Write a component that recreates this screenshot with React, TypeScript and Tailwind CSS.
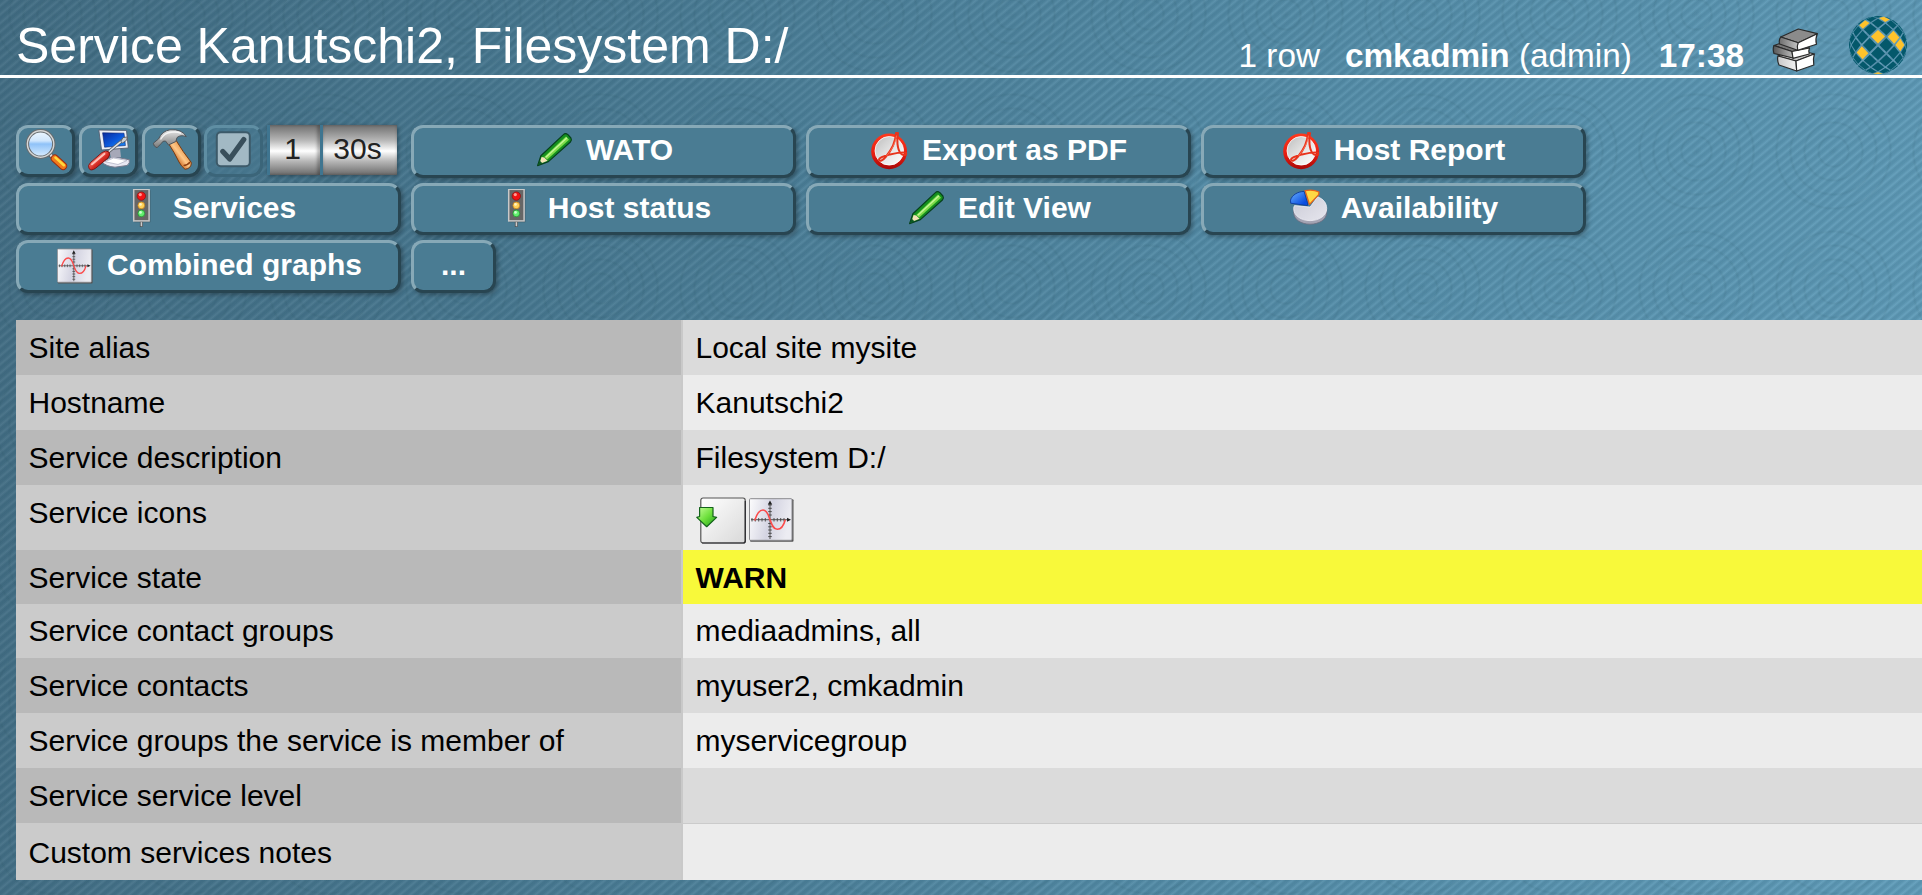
import type { ReactNode } from "react";

const GLOBE_R = 29;
const GLOBE_STEP = (17 * Math.PI) / 180;
const GOLD = ["0,-1", "2,-1", "3,0", "-2,1", "-2,-3", "1,-4", "0,5"];

function project(i: number, j: number) {
  const r = Math.hypot(i, j) * GLOBE_STEP;
  if (r === 0) return "30,30";
  const k = (GLOBE_R * Math.sin(Math.min(r, Math.PI / 2))) / (r / GLOBE_STEP);
  return `${(30 + i * k).toFixed(2)},${(30 + j * k).toFixed(2)}`;
}

function Globe() {
  const cells: ReactNode[] = [];
  const s = 0.84;
  for (let i = -6; i <= 6; i++) {
    for (let j = -6; j <= 6; j++) {
      if ((i + j) % 2 === 0 || Math.hypot(i, j) > 5.7) continue;
      const points = [project(i - s, j), project(i, j - s), project(i + s, j), project(i, j + s)].join(" ");
      cells.push(<polygon key={`${i},${j}`} points={points} fill={GOLD.includes(`${i},${j}`) ? "#ffc32b" : "#04586b"} />);
    }
  }
  return (
    <svg viewBox="0 0 60 60" className="ml-7 h-[60px] w-[60px] shrink-0">
      {cells}
    </svg>
  );
}

function Books() {
  return (
    <svg viewBox="0 0 50 48" className="ml-[26px] h-12 w-[50px] shrink-0" stroke="#2a2a2a" strokeWidth="1.2" strokeLinejoin="round">
      <defs>
        <linearGradient id="bk1" x1="0" x2="1"><stop offset="0" stopColor="#6e6e6e" /><stop offset="1" stopColor="#c4c4c4" /></linearGradient>
        <linearGradient id="bk2" x1="0" x2="1"><stop offset="0" stopColor="#555" /><stop offset="1" stopColor="#bbb" /></linearGradient>
        <linearGradient id="bk3" x1="0" x2="1"><stop offset="0" stopColor="#c9c9c9" /><stop offset="1" stopColor="#f2f2f2" /></linearGradient>
      </defs>
      <path d="M8 29 L26 22 L44.3 27 L26 34Z" fill="#c4c4c4" />
      <path d="M8 29 L26 34 L26.7 44 L9 38 Q6.8 33 8 29Z" fill="url(#bk3)" />
      <path d="M26 34 L44.3 27 Q42.8 32 43.8 38 L26.7 44Z" fill="#fff" />
      <path d="M4 18.5 L14 15 L39.5 21 L22 24.5Z" fill="#777" />
      <path d="M4 18.5 L22 24.5 L23 31 L4 26.5 Q2.4 22 4 18.5Z" fill="url(#bk2)" />
      <path d="M22 24.5 L39.5 21 Q38.2 24 39.3 27 L23 31.3Z" fill="#fff" />
      <path d="M10.7 10 L28.3 2 L47.3 6.7 L28.3 15.7Z" fill="#8b8b8b" />
      <path d="M10.7 10 L28.3 15.7 L27.7 23.3 L9.6 17 Q8.5 13 10.7 10Z" fill="url(#bk1)" />
      <path d="M28.3 15.7 L47.3 6.7 Q45 12 46.5 17.3 L27.7 23.3 Q26.5 19 28.3 15.7Z" fill="#fff" />
    </svg>
  );
}

function SearchIcon() {
  return (
    <svg viewBox="0.7 0 52 46" className="h-[46px] w-[52px]">
      <defs>
        <linearGradient id="lens" x1="0" y1="0" x2="0" y2="1">
          <stop offset="0" stopColor="#eef8ff" /><stop offset=".38" stopColor="#cfe6fd" /><stop offset=".5" stopColor="#8fc2f8" /><stop offset="1" stopColor="#dcefff" />
        </linearGradient>
      </defs>
      <path d="M31.5 26.5 L37 31.5" stroke="#5c5f62" strokeWidth="5" />
      <path d="M32 26.8 L37 31.5" stroke="#e4e4e4" strokeWidth="2.6" />
      <path d="M36.5 30.5 L44.8 38" stroke="#9b2a0c" strokeWidth="8" strokeLinecap="round" />
      <path d="M36.5 30.5 L44.8 38" stroke="#f0791b" strokeWidth="6.2" strokeLinecap="round" />
      <path d="M37.2 29.6 L45.6 37.2" stroke="#ffd93b" strokeWidth="2.6" strokeLinecap="round" />
      <circle cx="22.3" cy="16" r="13.2" fill="url(#lens)" stroke="#686d70" strokeWidth="3.4" />
      <circle cx="22.3" cy="16" r="13.2" fill="none" stroke="#d6d8d8" strokeWidth="1.4" />
    </svg>
  );
}

function MonitorIcon() {
  return (
    <svg viewBox="0 0 52 46" className="h-[46px] w-[52px]">
      <defs>
        <linearGradient id="scr" x1="0" y1="0" x2="1" y2="1"><stop offset="0" stopColor="#0a2a9c" /><stop offset=".5" stopColor="#0b55d8" /><stop offset="1" stopColor="#1c8cf8" /></linearGradient>
        <linearGradient id="red" x1="0" y1="0" x2="1" y2="1"><stop offset=".3" stopColor="#ff8378" /><stop offset=".55" stopColor="#d42a22" /><stop offset="1" stopColor="#7d0a0a" /></linearGradient>
      </defs>
      <path d="M20 34 L31 28.5 L47.3 31.8 Q48.5 35 45 37.5 L33 39.2 Q24 38.5 20 34Z" fill="#e8e8f2" stroke="#77798c" strokeWidth="1" />
      <path d="M23 33.7 L31.5 30 L45 32.5 L36 36.5Z" fill="#fff" stroke="#b5b6c8" strokeWidth=".8" />
      <path d="M27 21 L38 20 L39 29 L29 30Z" fill="#a6a8b8" />
      <path d="M16.8 2 L44.5 2.4 L46.3 20 L19.5 22Z" fill="#eceef4" stroke="#555d70" strokeWidth=".9" />
      <path d="M20.6 4.8 L42 5.2 L43.4 17.5 L22.6 19.2Z" fill="url(#scr)" stroke="#082270" strokeWidth=".6" />
      <path d="M25 25 L41 11.8" stroke="#5a5f66" strokeWidth="3" />
      <path d="M25 25 L41 11.8" stroke="#dfe3e8" strokeWidth="1.6" />
      <path d="M38.8 13.6 L41 9.6 L45.4 9 L44.6 12.2 L40.6 15Z" fill="#c9ced6" stroke="#555" strokeWidth=".8" />
      <path d="M7 40.5 Q5.4 37.5 8.5 34.5 L20 24.5 Q24 21.6 27 24 Q28.6 26.8 26 30 L13.5 40.3 Q9 43.4 7 40.5Z" fill="url(#red)" stroke="#7a0e0c" strokeWidth=".9" />
      <path d="M10 36.3 L22.5 25.8" stroke="#ffc0b8" strokeWidth="2" strokeLinecap="round" />
    </svg>
  );
}

function HammerIcon() {
  return (
    <svg viewBox="0 0 52 46" className="h-[46px] w-[52px]">
      <defs>
        <linearGradient id="wood" x1="0" y1="1" x2="1" y2="0"><stop offset=".3" stopColor="#c8641c" /><stop offset=".5" stopColor="#ffc888" /><stop offset=".75" stopColor="#e08a3c" /></linearGradient>
        <linearGradient id="steel" x1="0" y1="0" x2="0" y2="1"><stop offset="0" stopColor="#e8e8e8" /><stop offset="1" stopColor="#777" /></linearGradient>
      </defs>
      <path d="M23.5 15.5 L30.5 11.5 Q38 24 46.3 34.5 Q46.5 40.5 40 41.3 Q36 38 34 34 Q29.5 24.5 23.5 15.5Z" fill="url(#wood)" stroke="#7b3a10" strokeWidth="1" />
      <path d="M38.5 37.5 Q42 37.6 45.2 34" stroke="#8f3f10" strokeWidth="1.5" fill="none" />
      <path d="M8.3 15.2 L13.5 11 Q17 3 25 1.8 Q37 .8 41.3 8.6 Q35.5 6.4 32 9.6 L30.8 13.5 L23.5 17 L20.5 13 Q17.5 12.6 16.5 15.2 L12 19.8 Q8.5 18.5 8.3 15.2Z" fill="url(#steel)" stroke="#50555a" strokeWidth="1" />
      <path d="M15.5 11.5 Q19 5 26 4.2 Q32 3.6 36 5.2" fill="none" stroke="#fff" strokeOpacity=".75" strokeWidth="1.5" />
    </svg>
  );
}

function CheckIcon() {
  return (
    <svg viewBox="0 0 52 46" className="h-[46px] w-[52px]">
      <rect x="9.8" y="4.3" width="33" height="34" rx="4" fill="#a2b9c4" stroke="#3d5a69" strokeWidth="2" />
      <path d="M15.8 23.5 L22.7 31 L36.8 11.5" fill="none" stroke="#394f5b" strokeWidth="5.2" strokeLinejoin="round" strokeLinecap="round" />
    </svg>
  );
}

const VTICKS = [7, 10.3, 13.6, 17, 25.5, 28.8, 32, 35.3, 38.6];
const HTICKS = [3, 6.3, 9.7, 13, 16.3, 25, 28.3, 31.7, 35];

function Graph({ className }: { className: string }) {
  return (
    <svg viewBox="0 0 45 44" className={className}>
      <defs>
        <linearGradient id="gr" x1="0" x2="1" y1="0" y2=".2"><stop offset="0" stopColor="#fcfcfd" /><stop offset=".55" stopColor="#d4d4e2" /><stop offset="1" stopColor="#ececf2" /></linearGradient>
      </defs>
      <rect x="1" y="1.2" width="43.5" height="42.6" rx="1" fill="#555" />
      <rect x=".5" y=".7" width="42.5" height="41.6" rx="1" fill="url(#gr)" stroke="#8a8a8e" />
      <path d="M21 5 V41 M2 21.7 H39" stroke="#444" strokeWidth=".9" />
      {VTICKS.map((y) => <path key={y} d={`M19.2 ${y} H22.8`} stroke="#444" strokeWidth=".9" />)}
      {HTICKS.map((x) => <path key={x} d={`M${x} 20 V23.5`} stroke="#444" strokeWidth=".9" />)}
      <path d="M21 2.4 L23.2 6.6 H18.8Z M42 21.7 L38 19.7 V23.7Z" fill="#222" />
      <path d="M5.7 22.5 C8 15 11 12 14 12 C18.5 12 19.5 18 21 21.7 C22.5 26 24 31.3 28.3 31.3 C32 31.3 35 26.5 36.3 21.7" fill="none" stroke="#fb4a4a" strokeWidth="1.6" />
    </svg>
  );
}

function TrafficIcon() {
  return (
    <svg viewBox="1.3 0.6 40 40" className="size-10">
      <rect x="20.5" y="33" width="2.4" height="5.3" fill="#ccc" stroke="#444" strokeWidth=".6" />
      <rect x="14.6" y="1.8" width="16" height="32" fill="#333" opacity=".55" />
      <rect x="14" y=".9" width="15.4" height="31.6" fill="#666" stroke="#c9c9c9" strokeWidth="1.5" />
      <circle cx="21.6" cy="7.7" r="4.2" fill="#f11414" stroke="#8c0b0b" strokeWidth=".7" />
      <circle cx="21.6" cy="17" r="3.4" fill="#ffd25a" stroke="#c47a12" strokeWidth=".7" />
      <circle cx="21.6" cy="25" r="3.4" fill="#63ef6f" stroke="#1d8a2a" strokeWidth=".7" />
      <circle cx="20.6" cy="6.2" r="1.6" fill="#ff9c92" />
      <circle cx="20.8" cy="16" r="1.3" fill="#fff3c4" />
      <circle cx="20.8" cy="24" r="1.3" fill="#d0ffd2" />
    </svg>
  );
}

function PencilIcon() {
  return (
    <svg viewBox="-0.4 0 40 40" className="size-10">
      <path d="M3.2 34.6 L6.5 24.8 L29 3.6 Q31 1.6 33.5 3.6 L36.5 7 Q37.8 9 36 11 L14 30.6Z" fill="#16911f" stroke="#07401e" strokeWidth="1.2" strokeLinejoin="round" />
      <path d="M9.8 26 L31.6 5.6 L34.6 8.8 L12.8 28.6Z" fill="#7fdc4a" />
      <path d="M11.4 26.3 L32.6 6.8" stroke="#c5f79a" strokeWidth="1.4" />
      <path d="M7.2 26 L9.8 26.4 L13.2 29.8 L7.6 32 L5.2 32Z" fill="#f5e3b8" />
      <path d="M3.2 34.6 L5.2 29.6 L8.3 32.4Z" fill="#0d5a22" />
    </svg>
  );
}

function PdfIcon() {
  return (
    <svg viewBox="0.5 0.4 40 40" className="size-10">
      <defs>
        <linearGradient id="pdf" x1="0" y1="0" x2="1" y2="1"><stop offset="0" stopColor="#bdbdbd" /><stop offset=".5" stopColor="#e4e4e4" /><stop offset="1" stopColor="#fff" /></linearGradient>
        <linearGradient id="ring" x1="0" y1="0" x2="0" y2="1"><stop offset="0" stopColor="#ff3a1e" /><stop offset=".6" stopColor="#e41c10" /><stop offset="1" stopColor="#a80808" /></linearGradient>
      </defs>
      <circle cx="19.6" cy="20.7" r="17.9" fill="url(#ring)" />
      <circle cx="19.8" cy="20.2" r="14.3" fill="url(#pdf)" stroke="#fff" strokeWidth=".8" />
      <path d="M26.5 2.5 C26 12 21.5 20 16.5 26 C13.5 29.8 10.5 31 9.6 29.6 C8.8 27.6 14 25.5 20 24 C26 22.6 33.5 20.8 36.5 22.2 C37.8 24.8 33.5 25.6 31 22.5 C28 19 26.8 9 28.6 2.5 Z" fill="none" stroke="#e8331c" strokeWidth="2" strokeLinejoin="round" />
      <path d="M27 5 C26 13 21.5 20 17 25.5" fill="none" stroke="#ff7a5c" strokeWidth=".8" />
    </svg>
  );
}

function PieIcon() {
  return (
    <svg viewBox="0.9 0.4 40 40" className="size-10">
      <defs>
        <linearGradient id="pie" x1="0" y1="0" x2="1" y2="1"><stop offset="0" stopColor="#cbcbd6" /><stop offset="1" stopColor="#e6e6ee" /></linearGradient>
        <linearGradient id="blue" x1="0" y1="0" x2="1" y2="1"><stop offset="0" stopColor="#6ab2ff" /><stop offset=".8" stopColor="#0a4de0" /></linearGradient>
      </defs>
      <path d="M5.6 20 V24 C5.6 31 13 35.6 22 35.6 C31 35.6 38.6 31 38.6 24 V20Z" fill="#a3a3b3" stroke="#6d6e80" strokeWidth=".8" />
      <path d="M22 18.5 L29.5 8.2 C35.5 10.5 38.6 14.6 38.6 20 C38.6 27 31 32 22 32 C13 32 5.6 27 5.6 20 C5.6 18.6 6 17.8 6.4 17Z" fill="url(#pie)" stroke="#f0f0f6" strokeWidth=".8" />
      <path d="M2.4 11.5 C4 6.4 9.5 3 16 2.8 L19.4 14.4 V17 L2.6 14.6Z" fill="url(#blue)" stroke="#0c3a9e" strokeWidth=".9" />
      <path d="M17 2 Q25 .4 30.8 3.4 L30.6 6 L21.4 15.8Z" fill="#ffd944" stroke="#e8641a" strokeWidth="1.3" strokeLinejoin="round" />
    </svg>
  );
}

function OutputIcon() {
  return (
    <svg viewBox="0 0 50 50" className="h-[50px] w-[50px]">
      <defs>
        <linearGradient id="pg" x1="0" y1="0" x2="1" y2="1"><stop offset="0" stopColor="#fff" /><stop offset="1" stopColor="#d9d9d9" /></linearGradient>
        <linearGradient id="ga" x1="0" y1="0" x2="1" y2="1"><stop offset="0" stopColor="#c6ff9a" /><stop offset=".5" stopColor="#6ee03c" /><stop offset="1" stopColor="#1d9a1a" /></linearGradient>
      </defs>
      <rect x="4.8" y="3" width="44.4" height="45" rx="2.2" fill="url(#pg)" stroke="#555" strokeWidth="1.2" />
      <path d="M6 48 H47.5 Q49.3 48 49.3 46 V6" fill="none" stroke="#2c2c30" strokeWidth="1.2" />
      <path d="M3.6 12.5 H17 V21.5 L20.6 22.4 L10.7 31.7 L.8 22.4 L3.6 21.5Z" fill="url(#ga)" stroke="#14631c" strokeWidth="1.2" strokeLinejoin="round" />
    </svg>
  );
}

function IconButton({ children, dim }: { children: ReactNode; dim?: boolean }) {
  return (
    <button
      className={
        dim
          ? "flex h-[51.5px] w-[59px] items-start rounded-xl border-[3px] border-t-[#5f8ea3] border-l-[#5f8ea3] border-r-[#3b6579] border-b-[#3b6579] bg-[#4a7c93]/50"
          : "flex h-[51.5px] w-[59px] items-start rounded-xl border-[3px] border-t-[#87a9b7] border-l-[#87a9b7] border-r-[#284551] border-b-[#284551] bg-[#4a7c93] shadow-[2px_2px_4px_rgba(0,0,0,0.3)]"
      }
    >
      {children}
    </button>
  );
}

function Button({ icon, label }: { icon?: ReactNode; label: string }) {
  return (
    <button
      className={`flex h-[52.5px] items-center justify-center gap-3 rounded-xl border-[3px] border-t-[#87a9b7] border-l-[#87a9b7] border-r-[#284551] border-b-[#284551] bg-[#4a7c93] text-[30px] leading-[42px] font-bold text-white shadow-[2px_2px_4px_rgba(0,0,0,0.3)] ${icon ? "w-[385px]" : "w-[85px]"}`}
    >
      {icon}
      <span className="pb-0.5 whitespace-nowrap">{label}</span>
    </button>
  );
}

const rows: { label: string; value: ReactNode; height: string; warn?: boolean }[] = [
  { label: "Site alias", value: "Local site mysite", height: "h-[55px]" },
  { label: "Hostname", value: "Kanutschi2", height: "h-[55px]" },
  { label: "Service description", value: "Filesystem D:/", height: "h-[55px]" },
  {
    label: "Service icons",
    value: (
      <div className="flex gap-[3px] pt-2.5">
        <OutputIcon />
        <Graph className="mt-[3px] h-11 w-[45px]" />
      </div>
    ),
    height: "h-[65px]",
  },
  { label: "Service state", value: "WARN", height: "h-[54px]", warn: true },
  { label: "Service contact groups", value: "mediaadmins, all", height: "h-[54px] leading-[53px]" },
  { label: "Service contacts", value: "myuser2, cmkadmin", height: "h-[55px]" },
  { label: "Service groups the service is member of", value: "myservicegroup", height: "h-[55px]" },
  { label: "Service service level", value: "", height: "h-[56px] border-b border-[#cbcbcb]" },
  { label: "Custom services notes", value: "", height: "h-[56px] leading-[57px]" },
];

export default function App() {
  return (
    <div className="h-[895px] w-full overflow-hidden font-['Liberation_Sans',Arial,sans-serif] [background-image:repeating-linear-gradient(140deg,rgba(20,60,80,0.14)_0px,rgba(20,60,80,0.12)_2px,rgba(255,255,255,0.04)_4.5px,rgba(20,60,80,0.14)_6.7px),radial-gradient(circle,rgba(20,60,70,0.06)_0px,transparent_6px,transparent_13px,rgba(20,60,70,0.08)_15px,transparent_17px,transparent_27px,rgba(20,60,70,0.08)_29px,transparent_31px,transparent_41px,rgba(20,60,70,0.08)_43px,transparent_45px,transparent_55px,rgba(20,60,70,0.08)_57px,transparent_59px),linear-gradient(97deg,#456f85_0%,#4a7a92_28%,#568ea9_62%,#639fbc_100%)] [background-position:0_0,121px_83px,0_0] [background-size:auto,137px_137px,auto]">
      <header className="flex h-[78px] items-end border-b-[3px] border-white pl-4 text-white">
        <h1 className="grow text-[50px] leading-[57px] whitespace-nowrap">Service Kanutschi2, Filesystem D:/</h1>
        <div className="flex items-end pr-3.5 text-[33.3px] leading-[38px] whitespace-nowrap">
          <span>1 row</span>
          <span className="ml-[25px]">
            <b>cmkadmin</b> (admin)
          </span>
          <b className="ml-[27px]">17:38</b>
          <Books />
          <Globe />
        </div>
      </header>

      <nav className="flex flex-col gap-[5px] px-4 pt-[47px]">
        <div className="flex gap-2.5">
          <div className="flex w-[385px] items-start gap-[3.75px]">
            <IconButton><SearchIcon /></IconButton>
            <IconButton><MonitorIcon /></IconButton>
            <IconButton><HammerIcon /></IconButton>
            <IconButton dim><CheckIcon /></IconButton>
            <div className="flex h-[50px] text-[30px] leading-[47px] text-[#222] shadow-[1px_1px_4px_rgba(0,0,0,0.35)]">
              <div className="w-[53px] border-l-[3px] border-[#3f7590] bg-[linear-gradient(#6f6f6f,#b5b5b5_30%,#fff_52%,#b8b8b8_72%,#6a6a6a)] pr-[5px] text-center shadow-[inset_-3px_0_3px_rgba(0,0,0,0.25)]">1</div>
              <div className="w-[77px] border-l-[3px] border-[#3f7590] bg-[linear-gradient(#6f6f6f,#b5b5b5_30%,#fff_52%,#b8b8b8_72%,#6a6a6a)] pr-[5px] text-center shadow-[inset_0_0_3px_rgba(0,0,0,0.25)]">30s</div>
            </div>
          </div>
          <Button icon={<PencilIcon />} label="WATO" />
          <Button icon={<PdfIcon />} label="Export as PDF" />
          <Button icon={<PdfIcon />} label="Host Report" />
        </div>
        <div className="flex gap-2.5">
          <Button icon={<TrafficIcon />} label="Services" />
          <Button icon={<TrafficIcon />} label="Host status" />
          <Button icon={<PencilIcon />} label="Edit View" />
          <Button icon={<PieIcon />} label="Availability" />
        </div>
        <div className="flex gap-2.5">
          <Button icon={<Graph className="mr-[2px] ml-[2px] h-[36px] w-[36px]" />} label="Combined graphs" />
          <Button label="..." />
        </div>
      </nav>

      <main className="mt-[27.5px] ml-4 text-[30px] leading-[55px] text-black">
        {rows.map((row, i) => (
          <div key={row.label} className={`flex ${row.height}`}>
            <div className={`w-[667px] shrink-0 border-r-2 border-[#c9c9c9] pl-[12.5px] ${i % 2 === 0 ? "bg-[#b9b9b9]" : "bg-[#cbcbcb]"}`}>{row.label}</div>
            <div className={`grow pl-[12.5px] ${row.warn ? "bg-[#f8f93a] font-bold" : i % 2 === 0 ? "bg-[#dbdbdb]" : "bg-[#ececec]"}`}>{row.value}</div>
          </div>
        ))}
      </main>
    </div>
  );
}
